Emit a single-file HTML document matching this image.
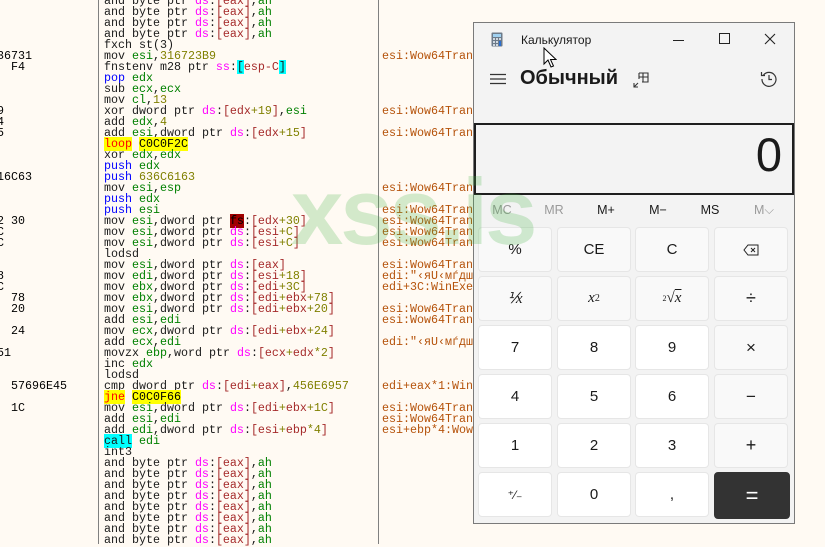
<!DOCTYPE html>
<html><head><meta charset="utf-8"><style>
*{margin:0;padding:0;box-sizing:border-box}
body{width:825px;height:544px;overflow:hidden;background:#fffaf3;position:relative;font-family:"Liberation Mono",monospace}
.vl{position:absolute;top:0;width:1px;height:544px;background:#808080}
.rows{position:absolute;top:-4px;font-size:11.67px;line-height:11px;color:#1a1a1a}
.rows div{height:11px;white-space:pre}
.g{color:#008000}.b{color:#0000ff}.m{color:#ff00ff}.r{color:#a52a2a}.o{color:#808000}
.y{background:#ffff00;color:#000}.yr{background:#ffff00;color:#ff0000}.c{background:#00ffff}.fs{background:#a00000;color:#000}
.cm{color:#b5520a}
.calc{position:absolute;left:473px;top:22px;width:322px;height:502px;background:#f3f3f3;border:1px solid #7a7a7a;font-family:"Liberation Sans","DejaVu Sans",sans-serif;color:#1a1a1a}
.calc .a{position:absolute}
.btn{position:absolute;width:74px;height:45px;border-radius:4px;background:#f9f9f9;border:1px solid #e6e6e6;display:flex;align-items:center;justify-content:center;font-size:15px;color:#1a1a1a}
.w{background:#fff}
.mem{position:absolute;top:180px;font-size:12.5px;width:40px;text-align:center}
.wm{position:absolute;left:291px;top:158px;font-family:"Liberation Sans",sans-serif;font-weight:bold;font-size:94px;color:rgba(70,180,70,0.24);letter-spacing:-3px;z-index:5}
</style></head><body>
<div class="vl" style="left:98px"></div>
<div class="vl" style="left:378px"></div>
<div class="rows" style="left:-3px;color:#000">
<div> </div><div> </div><div> </div><div> </div><div> </div>
<div>36731</div><div>  F4</div><div> </div><div> </div><div> </div>
<div>9</div><div>4</div><div>5</div><div> </div><div> </div><div> </div>
<div>16C63</div><div> </div><div> </div><div> </div>
<div>2 30</div><div>C</div><div>C</div><div> </div><div> </div>
<div>8</div><div>C</div><div>  78</div><div>  20</div><div> </div><div>  24</div><div> </div><div>51</div>
<div> </div><div> </div><div>  57696E45</div><div> </div><div>  1C</div>
</div>
<div class="rows" style="left:104px">
<div>and byte ptr <span class="m">ds</span>:<span class="r">[eax]</span>,<span class="g">ah</span></div>
<div>and byte ptr <span class="m">ds</span>:<span class="r">[eax]</span>,<span class="g">ah</span></div>
<div>and byte ptr <span class="m">ds</span>:<span class="r">[eax]</span>,<span class="g">ah</span></div>
<div>and byte ptr <span class="m">ds</span>:<span class="r">[eax]</span>,<span class="g">ah</span></div>
<div>fxch st(3)</div>
<div>mov <span class="g">esi</span>,<span class="o">316723B9</span></div>
<div>fnstenv m28 ptr <span class="m">ss</span>:<span class="c">[</span><span class="r">esp-C</span><span class="c">]</span></div>
<div><span class="b">pop</span> <span class="g">edx</span></div>
<div>sub <span class="g">ecx</span>,<span class="g">ecx</span></div>
<div>mov <span class="g">cl</span>,<span class="o">13</span></div>
<div>xor dword ptr <span class="m">ds</span>:<span class="r">[edx<span class="o">+19</span>]</span>,<span class="g">esi</span></div>
<div>add <span class="g">edx</span>,<span class="o">4</span></div>
<div>add <span class="g">esi</span>,dword ptr <span class="m">ds</span>:<span class="r">[edx<span class="o">+15</span>]</span></div>
<div><span class="yr">loop</span> <span class="y">C0C0F2C</span></div>
<div>xor <span class="g">edx</span>,<span class="g">edx</span></div>
<div><span class="b">push</span> <span class="g">edx</span></div>
<div><span class="b">push</span> <span class="o">636C6163</span></div>
<div>mov <span class="g">esi</span>,<span class="g">esp</span></div>
<div><span class="b">push</span> <span class="g">edx</span></div>
<div><span class="b">push</span> <span class="g">esi</span></div>
<div>mov <span class="g">esi</span>,dword ptr <span class="fs">fs</span>:<span class="r">[edx<span class="o">+30</span>]</span></div>
<div>mov <span class="g">esi</span>,dword ptr <span class="m">ds</span>:<span class="r">[esi<span class="o">+C</span>]</span></div>
<div>mov <span class="g">esi</span>,dword ptr <span class="m">ds</span>:<span class="r">[esi<span class="o">+C</span>]</span></div>
<div>lodsd</div>
<div>mov <span class="g">esi</span>,dword ptr <span class="m">ds</span>:<span class="r">[eax]</span></div>
<div>mov <span class="g">edi</span>,dword ptr <span class="m">ds</span>:<span class="r">[esi<span class="o">+18</span>]</span></div>
<div>mov <span class="g">ebx</span>,dword ptr <span class="m">ds</span>:<span class="r">[edi<span class="o">+3C</span>]</span></div>
<div>mov <span class="g">ebx</span>,dword ptr <span class="m">ds</span>:<span class="r">[edi<span class="o">+</span>ebx<span class="o">+78</span>]</span></div>
<div>mov <span class="g">esi</span>,dword ptr <span class="m">ds</span>:<span class="r">[edi<span class="o">+</span>ebx<span class="o">+20</span>]</span></div>
<div>add <span class="g">esi</span>,<span class="g">edi</span></div>
<div>mov <span class="g">ecx</span>,dword ptr <span class="m">ds</span>:<span class="r">[edi<span class="o">+</span>ebx<span class="o">+24</span>]</span></div>
<div>add <span class="g">ecx</span>,<span class="g">edi</span></div>
<div>movzx <span class="g">ebp</span>,word ptr <span class="m">ds</span>:<span class="r">[ecx<span class="o">+</span>edx<span class="o">*2</span>]</span></div>
<div>inc <span class="g">edx</span></div>
<div>lodsd</div>
<div>cmp dword ptr <span class="m">ds</span>:<span class="r">[edi<span class="o">+</span>eax]</span>,<span class="o">456E6957</span></div>
<div><span class="yr">jne</span> <span class="y">C0C0F66</span></div>
<div>mov <span class="g">esi</span>,dword ptr <span class="m">ds</span>:<span class="r">[edi<span class="o">+</span>ebx<span class="o">+1C</span>]</span></div>
<div>add <span class="g">esi</span>,<span class="g">edi</span></div>
<div>add <span class="g">edi</span>,dword ptr <span class="m">ds</span>:<span class="r">[esi<span class="o">+</span>ebp<span class="o">*4</span>]</span></div>
<div><span class="c">call</span> <span class="g">edi</span></div>
<div>int3</div>
<div>and byte ptr <span class="m">ds</span>:<span class="r">[eax]</span>,<span class="g">ah</span></div>
<div>and byte ptr <span class="m">ds</span>:<span class="r">[eax]</span>,<span class="g">ah</span></div>
<div>and byte ptr <span class="m">ds</span>:<span class="r">[eax]</span>,<span class="g">ah</span></div>
<div>and byte ptr <span class="m">ds</span>:<span class="r">[eax]</span>,<span class="g">ah</span></div>
<div>and byte ptr <span class="m">ds</span>:<span class="r">[eax]</span>,<span class="g">ah</span></div>
<div>and byte ptr <span class="m">ds</span>:<span class="r">[eax]</span>,<span class="g">ah</span></div>
<div>and byte ptr <span class="m">ds</span>:<span class="r">[eax]</span>,<span class="g">ah</span></div>
<div>and byte ptr <span class="m">ds</span>:<span class="r">[eax]</span>,<span class="g">ah</span></div>
</div>
<div class="rows cm" style="left:382px">
<div> </div><div> </div><div> </div><div> </div><div> </div>
<div>esi:Wow64Tran</div><div> </div><div> </div><div> </div><div> </div>
<div>esi:Wow64Tran</div><div> </div><div>esi:Wow64Tran</div><div> </div><div> </div><div> </div><div> </div>
<div>esi:Wow64Tran</div><div> </div>
<div>esi:Wow64Tran</div><div>esi:Wow64Tran</div><div>esi:Wow64Tran</div><div>esi:Wow64Tran</div><div> </div>
<div>esi:Wow64Tran</div><div>edi:"‹яU‹мѓдш</div><div>edi+3C:WinExe</div><div> </div>
<div>esi:Wow64Tran</div><div>esi:Wow64Tran</div><div> </div><div>edi:"‹яU‹мѓдш</div><div> </div><div> </div><div> </div>
<div>edi+eax*1:Win</div><div> </div><div>esi:Wow64Tran</div><div>esi:Wow64Tran</div><div>esi+ebp*4:Wow</div>
</div>

<div class="calc">
<svg class="a" style="left:17px;top:9px" width="12" height="15" viewBox="0 0 12 15"><rect x="0.5" y="0.5" width="11" height="14" rx="1" fill="#6c7a89"/><rect x="2" y="2" width="8" height="3" fill="#9fd0f0"/><g fill="#d0d8e0"><rect x="2" y="6" width="2" height="2"/><rect x="5" y="6" width="2" height="2"/><rect x="8" y="6" width="2" height="2"/><rect x="2" y="9" width="2" height="2"/><rect x="5" y="9" width="2" height="2"/><rect x="2" y="12" width="2" height="2"/><rect x="5" y="12" width="2" height="2"/></g><rect x="8" y="9" width="2" height="5" fill="#2a6fd0"/></svg>
<div class="a" style="left:47px;top:10px;font-size:12px">Калькулятор</div>
<div class="a" style="left:199px;top:17px;width:11px;height:1px;background:#222"></div>
<div class="a" style="left:245px;top:10px;width:11px;height:11px;border:1px solid #222"></div>
<svg class="a" style="left:290px;top:10px" width="12" height="12"><path d="M1 1L11 11M11 1L1 11" stroke="#222" stroke-width="1.1"/></svg>
<svg class="a" style="left:16px;top:50px" width="16" height="12"><path d="M0 1.5H16M0 6H16M0 10.5H16" stroke="#333" stroke-width="1.2"/></svg>
<div class="a" style="left:46px;top:44px;font-size:20px;font-weight:bold">Обычный</div>
<svg class="a" style="left:159px;top:49px" width="16" height="16" viewBox="0 0 16 16" fill="none" stroke="#333" stroke-width="1.1"><path d="M6 1H15V10H9M6 1V7M6 5H15M10 1V10"/><path d="M1 15L5 11M1 11V15H5" /></svg>
<svg class="a" style="left:286px;top:47px" width="18" height="18" viewBox="0 0 18 18" fill="none" stroke="#333" stroke-width="1.2"><path d="M3.5 5A7 7 0 1 1 2 9"/><path d="M1.5 2V5.5H5"/><path d="M9 5V9.5H12"/></svg>
<div class="a" style="left:0;top:100px;width:320px;height:72px;border:2px solid #1e1e1e;background:#f3f3f3"></div>
<div class="a" style="right:12px;top:104px;font-size:47px;font-family:'Liberation Sans',sans-serif">0</div>
<div class="mem" style="left:8px;color:#9a9a9a">MC</div>
<div class="mem" style="left:60px;color:#9a9a9a">MR</div>
<div class="mem" style="left:112px">M+</div>
<div class="mem" style="left:164px">M−</div>
<div class="mem" style="left:216px">MS</div>
<div class="mem" style="left:270px;color:#9a9a9a">M⌵</div>

<div class="btn" style="left:4px;top:204px">%</div>
<div class="btn" style="left:83px;top:204px">CE</div>
<div class="btn" style="left:161px;top:204px">C</div>
<div class="btn" style="left:240px;top:204px"><svg width="16" height="12" viewBox="0 0 16 12" fill="none" stroke="#222" stroke-width="1"><path d="M5 1H15V11H5L1 6Z"/><path d="M8 4L12 8M12 4L8 8"/></svg></div>
<div class="btn" style="left:4px;top:253px;font-family:'Liberation Serif',serif;font-style:italic">⅟x</div>
<div class="btn" style="left:83px;top:253px;font-family:'Liberation Serif',serif;font-style:italic">x<sup style="font-size:10px;font-style:normal">2</sup></div>
<div class="btn" style="left:161px;top:253px;font-family:'Liberation Serif',serif"><sup style="font-size:8px">2</sup>√<i style="text-decoration:overline">x</i></div>
<div class="btn" style="left:240px;top:253px;font-size:18px">÷</div>
<div class="btn w" style="left:4px;top:302px">7</div>
<div class="btn w" style="left:83px;top:302px">8</div>
<div class="btn w" style="left:161px;top:302px">9</div>
<div class="btn" style="left:240px;top:302px;font-size:17px">×</div>
<div class="btn w" style="left:4px;top:351px">4</div>
<div class="btn w" style="left:83px;top:351px">5</div>
<div class="btn w" style="left:161px;top:351px">6</div>
<div class="btn" style="left:240px;top:351px;font-size:17px">−</div>
<div class="btn w" style="left:4px;top:400px">1</div>
<div class="btn w" style="left:83px;top:400px">2</div>
<div class="btn w" style="left:161px;top:400px">3</div>
<div class="btn" style="left:240px;top:400px;font-size:18px">+</div>
<div class="btn w" style="left:4px;top:449px;font-size:12px">⁺⁄₋</div>
<div class="btn w" style="left:83px;top:449px">0</div>
<div class="btn w" style="left:161px;top:449px">,</div>
<div class="btn" style="left:240px;top:449px;width:76px;height:47px;background:#333;border-color:#333;color:#fff;font-size:22px">=</div>
</div>
<svg style="position:absolute;left:543px;top:47px;z-index:6" width="14" height="22" viewBox="0 0 14 22"><path d="M1 1V17L5 13L8 20L10.5 19L7.5 12.5H13Z" fill="#fff" stroke="#000" stroke-width="1"/></svg>
<div class="wm">xss.is</div>
</body></html>
